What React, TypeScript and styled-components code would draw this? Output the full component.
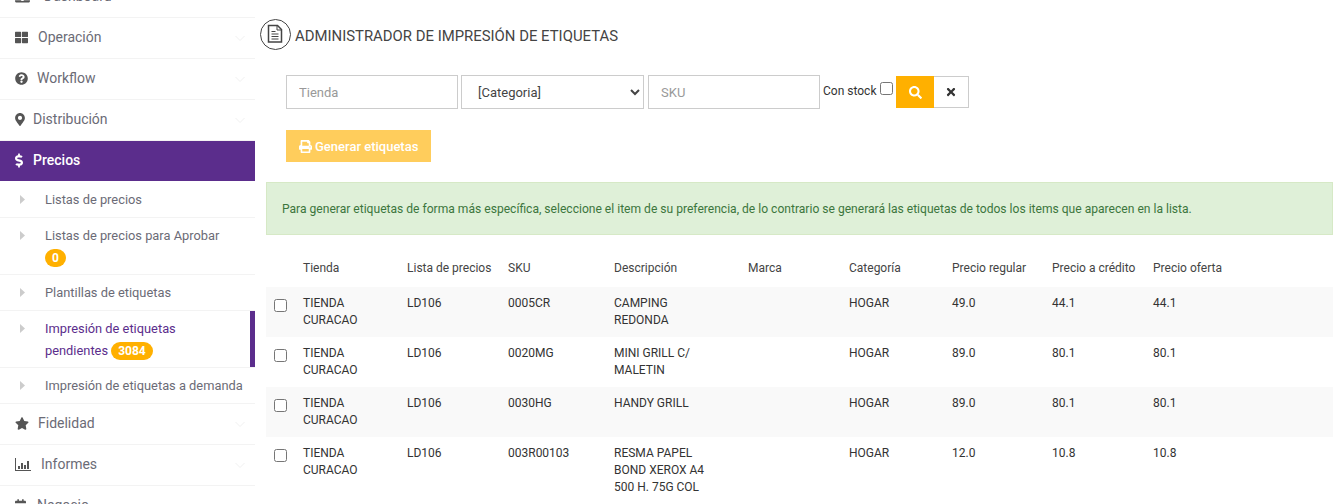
import * as React from 'react'
import styled, { createGlobalStyle } from 'styled-components'
import { FaThLarge, FaQuestionCircle, FaMapMarkerAlt, FaDollarSign, FaStar, FaPrint, FaSearch, FaTimes, FaLaptop, FaCalendarAlt } from 'react-icons/fa'

const Global = createGlobalStyle`
  html, body {
    margin: 0;
    padding: 0;
    height: 504px;
    overflow: hidden;
    background: #fff;
    font-family: Roboto, sans-serif;
  }
`
const Page = styled.div`
  display: flex;
  width: 1342px;
  height: 504px;
  overflow: hidden;
`
const Sidebar = styled.nav`
  width: 255px;
  flex: none;
  margin-top: -23px;
`
const MainItem = styled.div<{ $active?: boolean }>`
  display: flex;
  align-items: center;
  height: 38px;
  padding: 0 0 2px 15px;
  border-bottom: 1px solid ${p => (p.$active ? 'transparent' : '#f3f3f3')};
  background: ${p => (p.$active ? '#5b2d8c' : '#fff')};
  background-clip: padding-box;
  color: ${p => (p.$active ? '#fff' : '#6b6b76')};
  font-size: 14px;
  font-weight: ${p => (p.$active ? 500 : 400)};
  svg {
    color: ${p => (p.$active ? '#fff' : '#555')};
    height: ${p => (p.$active ? 15 : 13)}px;
  }
`
const IconSlot = styled.span<{ $w: number; $gap: number }>`
  display: flex;
  margin-right: ${p => p.$gap}px;
  svg {
    width: ${p => p.$w}px;
  }
`
const Chevron = styled.svg`
  margin-left: auto;
  margin-right: 10px;
  margin-top: 3px;
`
const SubItem = styled.div<{ $current?: boolean; $tall?: boolean }>`
  display: flex;
  position: relative;
  height: ${p => (p.$tall ? 57 : 36)}px;
  box-sizing: border-box;
  padding: 7px 0 0 20px;
  border-bottom: 1px solid #f3f3f3;
  color: ${p => (p.$current ? '#5b2d8c' : '#6b6b76')};
  font-size: 12.85px;
  line-height: 22px;
`
const Caret = styled.svg`
  flex: none;
  margin-top: 6px;
`
const SubLabel = styled.div`
  margin-left: 20px;
  white-space: nowrap;
`
const Badge = styled.span`
  display: inline-block;
  background: #ffb000;
  color: #fff;
  font-weight: 700;
  font-size: 12px;
  line-height: 18px;
  height: 18px;
  padding: 0 7px;
  border-radius: 9px;
`
const CurrentMark = styled.span`
  position: absolute;
  right: 0;
  top: 0;
  bottom: 0;
  width: 5px;
  background: #5b2d8c;
`
const Main = styled.main`
  flex: 1;
  min-width: 0;
  padding: 19px 9px 0 11px;
`
const TitleRow = styled.div`
  display: flex;
  align-items: center;
  gap: 4px;
  margin-left: -6px;
  color: #444;
  font-size: 14.9px;
  height: 34px;
  svg {
    align-self: flex-start;
  }
`
const Filters = styled.div`
  display: flex;
  align-items: center;
  margin: 22px 0 0 20px;
  height: 34px;
`
const TextField = styled.input`
  box-sizing: border-box;
  width: 172px;
  height: 34px;
  border: 1px solid #ccc;
  padding: 0 12px;
  font: 13px Roboto, sans-serif;
  color: #444;
  outline: none;
  &::placeholder { color: #999; opacity: 1; }
`
const SelectField = styled.select`
  box-sizing: border-box;
  width: 183px;
  height: 34px;
  margin: 0 4px 0 3px;
  border: 1px solid #ccc;
  background: #fff;
  padding: 0 12px;
  font: 13px Roboto, sans-serif;
  color: #444;
  outline: none;
`
const StockLabel = styled.label`
  display: flex;
  align-items: center;
  margin: 0 0 2px 3px;
  font-size: 12px;
  color: #333;
  input {
    margin: 0 3px 5px 4px;
    width: 13px;
    height: 13px;
  }
`
const SearchButton = styled.button`
  display: flex;
  align-items: center;
  justify-content: center;
  width: 38px;
  height: 32px;
  border: none;
  background: #ffb000;
  color: #fff;
  font-size: 13px;
  padding: 0;
`
const ClearButton = styled.button`
  display: flex;
  align-items: center;
  justify-content: center;
  box-sizing: border-box;
  width: 35px;
  height: 32px;
  border: 1px solid #ccc;
  border-left: none;
  background: #fff;
  color: #333;
  font-size: 12px;
  padding: 0;
`
const PrintButton = styled.button`
  display: flex;
  align-items: center;
  gap: 3px;
  height: 32px;
  width: 145px;
  margin: 21px 0 0 20px;
  padding: 0 0 0 13px;
  border: none;
  background: #ffcd5c;
  color: #fff;
  font: 500 13px Roboto, sans-serif;
`
const Notice = styled.div`
  margin-top: 20px;
  box-sizing: border-box;
  height: 53px;
  padding: 0 15px;
  display: flex;
  align-items: center;
  background: #dff0d8;
  border: 1px solid #d6e9c6;
  color: #3c763d;
  font-size: 12.08px;
  white-space: nowrap;
`
const Table = styled.table`
  width: 1067px;
  margin-top: 15px;
  table-layout: fixed;
  border-collapse: collapse;
  font-size: 12px;
  line-height: 17px;
  color: #333;
`
const Head = styled.th`
  height: 37px;
  padding: 0 8px;
  text-align: left;
  font-weight: 400;
  white-space: nowrap;
  color: #444;
`
const Row = styled.tr<{ $striped: boolean }>`
  background: ${p => (p.$striped ? '#f9f9f9' : '#fff')};
`
const Cell = styled.td`
  height: 50px;
  box-sizing: border-box;
  padding: 8px;
  vertical-align: top;
`
const DescCell = styled(Cell)`
  padding-right: 20px;
`
const CheckCell = styled(Cell)`
  input {
    margin: 4px 0 0 0;
    width: 13px;
    height: 13px;
  }
`

const widths = [29, 104, 101, 106, 134, 101, 103, 100, 101, 188]
const headers = ['', 'Tienda', 'Lista de precios', 'SKU', 'Descripción', 'Marca', 'Categoría', 'Precio regular', 'Precio a crédito', 'Precio oferta']
const rows = [
  ['0005CR', 'CAMPING REDONDA', '49.0', '44.1', '44.1'],
  ['0020MG', 'MINI GRILL C/ MALETIN', '89.0', '80.1', '80.1'],
  ['0030HG', 'HANDY GRILL', '89.0', '80.1', '80.1'],
  ['003R00103', 'RESMA PAPEL BOND XEROX A4 500 H. 75G COL', '12.0', '10.8', '10.8'],
]

const Down = () => (
  <Chevron width="10" height="6" viewBox="0 0 10 6" fill="none" stroke="#f0f0f0">
    <path d="M.5.5 5 5 9.500.5" />
  </Chevron>
)
const Arrow = () => (
  <Caret width="5" height="9" viewBox="0 0 5 9" fill="#cccccc">
    <path d="M0 0l5 4.500L0 9z" />
  </Caret>
)
const BarsIcon = () => (
  <svg viewBox="0 0 16 13" fill="#555">
    <path d="M0 0h1v12h15v1H0z" />
    <path d="M3 8h2v3H3zM6 5h2v6H6zM9 7h2v4H9zM12 3h2v8h-2z" />
  </svg>
)
const DocIcon = () => (
  <svg width="31" height="31" viewBox="0 0 31 31" fill="none" stroke="#444">
    <circle cx="15.500" cy="15.500" r="15" />
    <path d="M8.500 6.500h9l4 4v12.500h-13z" strokeWidth="1.500" />
    <path d="M17 6.500v4.500h4.500M11.500 12.500h4M11.500 15h7M11.500 17.500h7M11.500 20h7" />
  </svg>
)

const App = () => {
  return (
    <Page>
      <Global />
      <Sidebar>
        <MainItem><IconSlot $w={15} $gap={14}><FaLaptop /></IconSlot>Dashboard<Down /></MainItem>
        <MainItem><IconSlot $w={13} $gap={10}><FaThLarge /></IconSlot>Operación<Down /></MainItem>
        <MainItem><IconSlot $w={13} $gap={9}><FaQuestionCircle /></IconSlot>Workflow<Down /></MainItem>
        <MainItem><IconSlot $w={10} $gap={8}><FaMapMarkerAlt /></IconSlot>Distribución<Down /></MainItem>
        <MainItem $active><IconSlot $w={8} $gap={10}><FaDollarSign /></IconSlot>Precios</MainItem>
        <SubItem><Arrow /><SubLabel>Listas de precios</SubLabel></SubItem>
        <SubItem $tall><Arrow /><SubLabel>Listas de precios para Aprobar<br /><Badge>0</Badge></SubLabel></SubItem>
        <SubItem><Arrow /><SubLabel>Plantillas de etiquetas</SubLabel></SubItem>
        <SubItem $tall $current><Arrow /><SubLabel>Impresión de etiquetas<br />pendientes <Badge>3084</Badge></SubLabel><CurrentMark /></SubItem>
        <SubItem><Arrow /><SubLabel>Impresión de etiquetas a demanda</SubLabel></SubItem>
        <MainItem><IconSlot $w={14} $gap={9}><FaStar /></IconSlot>Fidelidad<Down /></MainItem>
        <MainItem><IconSlot $w={16} $gap={10}><BarsIcon /></IconSlot>Informes<Down /></MainItem>
        <MainItem><IconSlot $w={11} $gap={11}><FaCalendarAlt /></IconSlot>Negocio<Down /></MainItem>
      </Sidebar>
      <Main>
        <TitleRow><DocIcon />ADMINISTRADOR DE IMPRESIÓN DE ETIQUETAS</TitleRow>
        <Filters>
          <TextField placeholder="Tienda" />
          <SelectField defaultValue="cat"><option value="cat">[Categoria]</option></SelectField>
          <TextField placeholder="SKU" />
          <StockLabel>Con stock<input type="checkbox" /></StockLabel>
          <SearchButton><FaSearch /></SearchButton>
          <ClearButton><FaTimes /></ClearButton>
        </Filters>
        <PrintButton><FaPrint />Generar etiquetas</PrintButton>
        <Notice>Para generar etiquetas de forma más específica, seleccione el item de su preferencia, de lo contrario se generará las etiquetas de todos los items que aparecen en la lista.</Notice>
        <Table>
          <colgroup>
            {widths.map((w, i) => <col key={i} width={w} />)}
          </colgroup>
          <thead>
            <tr>{headers.map((h, i) => <Head key={i}>{h}</Head>)}</tr>
          </thead>
          <tbody>
            {rows.map((r, i) => (
              <Row key={r[0]} $striped={i % 2 === 0}>
                <CheckCell><input type="checkbox" /></CheckCell>
                <Cell>TIENDA CURACAO</Cell>
                <Cell>LD106</Cell>
                <Cell>{r[0]}</Cell>
                <DescCell>{r[1]}</DescCell>
                <Cell></Cell>
                <Cell>HOGAR</Cell>
                <Cell>{r[2]}</Cell>
                <Cell>{r[3]}</Cell>
                <Cell>{r[4]}</Cell>
              </Row>
            ))}
          </tbody>
        </Table>
      </Main>
    </Page>
  )
}

export default App
